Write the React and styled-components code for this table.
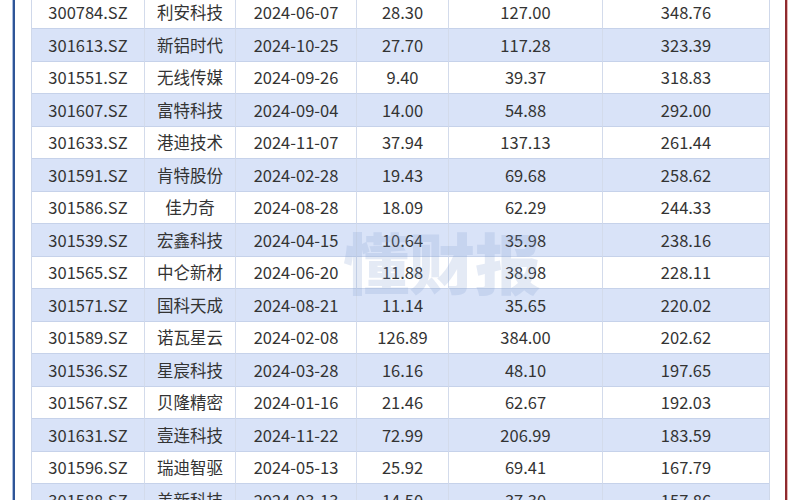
import React from "react";
import styled, { createGlobalStyle } from "styled-components";

const GlobalStyle = createGlobalStyle`
  html, body {
    margin: 0;
    padding: 0;
    background: #ffffff;
    overflow: hidden;
  }
`;

const rows = [
  ["300784.SZ", "利安科技", "2024-06-07", "28.30", "127.00", "348.76"],
  ["301613.SZ", "新铝时代", "2024-10-25", "27.70", "117.28", "323.39"],
  ["301551.SZ", "无线传媒", "2024-09-26", "9.40", "39.37", "318.83"],
  ["301607.SZ", "富特科技", "2024-09-04", "14.00", "54.88", "292.00"],
  ["301633.SZ", "港迪技术", "2024-11-07", "37.94", "137.13", "261.44"],
  ["301591.SZ", "肯特股份", "2024-02-28", "19.43", "69.68", "258.62"],
  ["301586.SZ", "佳力奇", "2024-08-28", "18.09", "62.29", "244.33"],
  ["301539.SZ", "宏鑫科技", "2024-04-15", "10.64", "35.98", "238.16"],
  ["301565.SZ", "中仑新材", "2024-06-20", "11.88", "38.98", "228.11"],
  ["301571.SZ", "国科天成", "2024-08-21", "11.14", "35.65", "220.02"],
  ["301589.SZ", "诺瓦星云", "2024-02-08", "126.89", "384.00", "202.62"],
  ["301536.SZ", "星宸科技", "2024-03-28", "16.16", "48.10", "197.65"],
  ["301567.SZ", "贝隆精密", "2024-01-16", "21.46", "62.67", "192.03"],
  ["301631.SZ", "壹连科技", "2024-11-22", "72.99", "206.99", "183.59"],
  ["301596.SZ", "瑞迪智驱", "2024-05-13", "25.92", "69.41", "167.79"],
  ["301588.SZ", "美新科技", "2024-03-13", "14.50", "37.30", "157.86"],
];

const Page = styled.div`
  width: 800px;
  height: 500px;
  overflow: hidden;
  display: flex;
  padding-left: 13px;
  box-sizing: border-box;
`;

const Frame = styled.div`
  width: 774px;
  height: 100%;
  box-sizing: border-box;
  border-left: 2px solid #2f5597;
  border-right: 2px solid #8e2b2f;
  box-shadow: 1px 0 0 #e8b4b4, -1px 0 0 #a9bde0;
  padding: 0 15px 0 16px;
  position: relative;
`;

const Table = styled.div`
  display: grid;
  grid-template-columns: 113px 91px 121px 92px 154px 166px;
  grid-auto-rows: 32.5px;
  margin-top: -3.5px;
  border-left: 1px solid #cfd8ea;
  border-right: 1px solid #cfd8ea;
`;

const Cell = styled.div`
  display: flex;
  align-items: center;
  justify-content: center;
  background: ${(p) => (p.$shaded ? "#d9e3f8" : "#ffffff")};
  border-bottom: 1px solid #c6d2ea;
  border-right: ${(p) => (p.$last ? "none" : "1px solid #d3dbeb")};
  font-family: "Noto Sans CJK SC", "Noto Sans", sans-serif;
  font-size: 16.5px;
  color: #333333;
  white-space: nowrap;
`;

const Watermark = styled.div`
  position: absolute;
  left: 328px;
  top: 212px;
  font-family: "Noto Sans CJK SC", sans-serif;
  font-weight: 900;
  font-size: 66px;
  letter-spacing: 0px;
  color: rgba(130, 160, 210, 0.22);
  pointer-events: none;
`;

export default function App() {
  return (
    <>
      <GlobalStyle />
      <Page>
        <Frame>
          <Table>
            {rows.map((row, i) =>
              row.map((val, j) => (
                <Cell key={`${i}-${j}`} $shaded={i % 2 === 1} $last={j === row.length - 1}>
                  {val}
                </Cell>
              ))
            )}
          </Table>
          <Watermark>懂财报</Watermark>
        </Frame>
      </Page>
    </>
  );
}
